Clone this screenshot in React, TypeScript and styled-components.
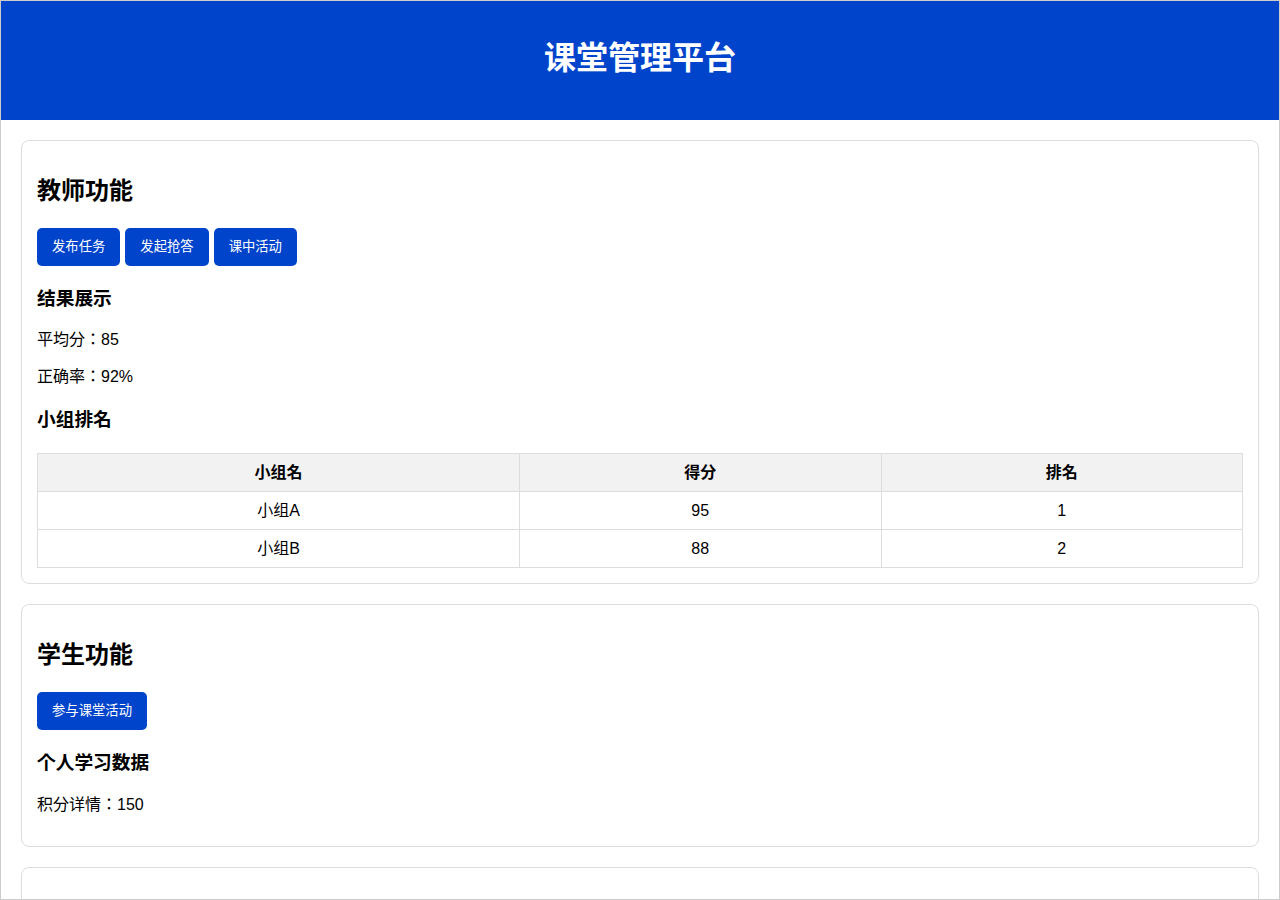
import styled, { createGlobalStyle } from "styled-components"

const GlobalStyle = createGlobalStyle`
  html, body {
    margin: 0;
    padding: 0;
    background: #fff;
  }
  body {
    font-family: "Liberation Sans", Arial, "Noto Sans CJK JP", sans-serif;
    color: #000;
  }
`

const Frame = styled.div`
  box-sizing: border-box;
  height: 100vh;
  border: 1px solid #ccc;
  overflow: hidden;
`

const Header = styled.header`
  background-color: #0044cc;
  color: #fff;
  text-align: center;
  height: 119px;
  box-sizing: border-box;
  padding: 0 20px 4px;
  display: flex;
  align-items: center;
  justify-content: center;
`

const Title = styled.h1`
  margin: 0;
  font-size: 32px;
  line-height: 37px;
  font-weight: 700;
`

const Main = styled.main`
  padding: 20px;
  display: flex;
  flex-direction: column;
  gap: 20px;
`

const Card = styled.section`
  border: 1px solid #ddd;
  border-radius: 8px;
  padding: 15px;
`

const CardTitle = styled.h2`
  font-size: 24px;
  line-height: 30px;
  margin: 20px 0 22px;
`

const SubTitle = styled.h3`
  font-size: 18.72px;
  line-height: 27px;
  margin: 18.72px 0;
`

const ButtonRow = styled.div`
  display: flex;
  gap: 5px;
`

const Button = styled.button`
  background-color: #0044cc;
  color: #fff;
  border: none;
  border-radius: 5px;
  padding: 0 15px;
  height: 38px;
  line-height: 38px;
  font-family: inherit;
  font-size: 13.333px;
  cursor: pointer;
`

const Text = styled.p`
  font-size: 16px;
  line-height: 20.5px;
  margin: 16px 0;
`

const Table = styled.table`
  width: 100%;
  border-collapse: collapse;
  margin-top: 20px;
  font-size: 16px;
`

const Cell = styled.td<{ $head?: boolean; $w?: string }>`
  border: 1px solid #ddd;
  padding: 0 10px;
  height: 38px;
  line-height: 20px;
  box-sizing: border-box;
  text-align: center;
  font-weight: ${p => (p.$head ? 700 : 400)};
  background: ${p => (p.$head ? "#f2f2f2" : "transparent")};
  width: ${p => p.$w || "auto"};
`

const groups = [
  { name: "小组A", score: 95, rank: 1 },
  { name: "小组B", score: 88, rank: 2 },
]

export default function App() {
  return (
    <>
      <GlobalStyle />
      <Frame>
        <Header>
          <Title>课堂管理平台</Title>
        </Header>
        <Main>
          <Card>
            <CardTitle>教师功能</CardTitle>
            <ButtonRow>
              <Button>发布任务</Button>
              <Button>发起抢答</Button>
              <Button>课中活动</Button>
            </ButtonRow>
            <SubTitle>结果展示</SubTitle>
            <Text>平均分：85</Text>
            <Text>正确率：92%</Text>
            <SubTitle>小组排名</SubTitle>
            <Table>
              <thead>
                <tr>
                  <Cell as="th" $head $w="40%">小组名</Cell>
                  <Cell as="th" $head $w="30%">得分</Cell>
                  <Cell as="th" $head $w="30%">排名</Cell>
                </tr>
              </thead>
              <tbody>
                {groups.map(g => (
                  <tr key={g.name}>
                    <Cell>{g.name}</Cell>
                    <Cell>{g.score}</Cell>
                    <Cell>{g.rank}</Cell>
                  </tr>
                ))}
              </tbody>
            </Table>
          </Card>
          <Card>
            <CardTitle>学生功能</CardTitle>
            <ButtonRow>
              <Button>参与课堂活动</Button>
            </ButtonRow>
            <SubTitle>个人学习数据</SubTitle>
            <Text>积分详情：150</Text>
          </Card>
          <Card>
            <CardTitle>家长功能</CardTitle>
          </Card>
        </Main>
      </Frame>
    </>
  )
}
